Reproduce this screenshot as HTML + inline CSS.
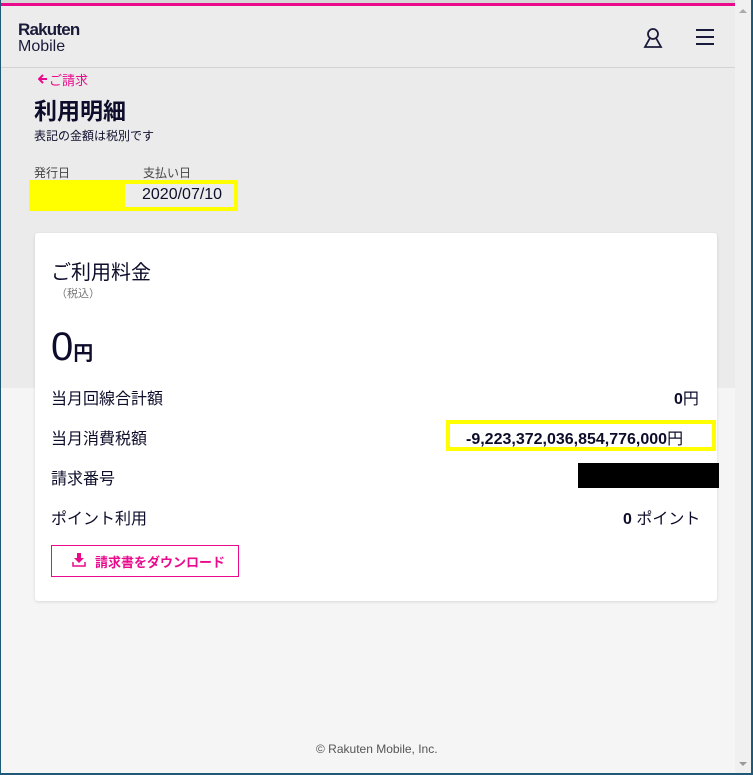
<!DOCTYPE html>
<html><head><meta charset="utf-8"><style>
*{margin:0;padding:0;box-sizing:border-box}
body{width:753px;height:775px;overflow:hidden;background:#f5f5f5;font-family:"Liberation Sans","Noto Sans CJK JP",sans-serif;color:#0d0d2b;position:relative}
.frame{position:absolute;left:0;top:0;width:753px;height:775px;border-right:2px solid #1e5a78;border-bottom:2px solid #1e5a78;border-left:1px solid #1e5a78}
.top{position:absolute;left:0;top:0;width:735px;height:3px;background:#d8d8d8}
.pink{position:absolute;left:0;top:3px;width:735px;height:3px;background:#ea0a8c}
.hdr{position:absolute;left:0;top:6px;width:735px;height:62px;background:#ececec;border-bottom:1px solid #d3d3d3}
.gray{position:absolute;left:0;top:68px;width:735px;height:320px;background:#ebebeb}
.sb{position:absolute;left:735px;top:0;width:16px;height:773px;background:#f0f0f0}
.t{position:absolute;white-space:nowrap}
.card{position:absolute;left:35px;top:233px;width:682px;height:368px;background:#fff;border-radius:3px;box-shadow:0 1px 3px rgba(0,0,0,.12)}
.row{font-size:16px}
</style></head><body>
<div class="top"></div><div class="pink"></div><div class="hdr"></div><div class="gray"></div>
<div class="sb"><div style="position:absolute;left:4px;top:9px;border:4px solid transparent;border-bottom:4px solid #aaa;border-top:0"></div><div style="position:absolute;left:4px;top:762px;border:4px solid transparent;border-top:4px solid #999;border-bottom:0"></div></div>
<div class="t" style="left:18px;top:20px;font-size:17px;font-weight:bold;letter-spacing:-0.8px;color:#1a1a3a">Rakuten</div>
<div class="t" style="left:18px;top:38px;font-size:16px;color:#1a1a3a">Mobile</div>
<svg style="position:absolute;left:641px;top:26px" width="24" height="24" viewBox="0 0 24 24" fill="none" stroke="#1a1a3a" stroke-width="1.8"><circle cx="12" cy="8" r="5"/><path d="M9 12 L4 21 H20 L15 12"/></svg>
<svg style="position:absolute;left:695px;top:28px" width="20" height="18" viewBox="0 0 20 18" stroke="#1a1a3a" stroke-width="2"><path d="M1 2H19M1 9H19M1 16H19"/></svg>
<svg style="position:absolute;left:38px;top:74px" width="10" height="10" viewBox="0 0 10 10" fill="none" stroke="#ea0a8c" stroke-width="2"><path d="M9 5H2M5 1L1 5L5 9"/></svg>
<div class="t" style="left:49px;top:70px;font-size:13px;color:#ea0a8c">ご請求</div>
<div class="t" style="left:34px;top:92px;font-size:23px;font-weight:bold">利用明細</div>
<div class="t" style="left:34px;top:127px;font-size:12px">表記の金額は税別です</div>
<div class="t" style="left:34px;top:164px;font-size:12px;color:#444">発行日</div>
<div class="t" style="left:143px;top:164px;font-size:12px;color:#444">支払い日</div>
<div style="position:absolute;left:29px;top:180px;width:209px;height:31px;background:#ffff00"></div>
<div style="position:absolute;left:125px;top:184px;width:109px;height:23px;background:#ececec"></div>
<div class="t" style="left:142px;top:186px;font-size:16px">2020/07/10</div>
<div class="card"></div>
<div class="t" style="left:51px;top:256px;font-size:20px">ご利用料金</div>
<div class="t" style="left:56px;top:285px;font-size:11px;color:#777">（税込）</div>
<div class="t" style="left:51px;top:324px;font-size:40px;line-height:46px">0<span style="font-size:20px;font-weight:bold">円</span></div>
<div class="t row" style="left:51px;top:385px">当月回線合計額</div>
<div class="t row" style="left:674px;top:385px;font-weight:bold">0<span style="font-weight:normal">円</span></div>
<div class="t row" style="left:51px;top:425px">当月消費税額</div>
<div style="position:absolute;left:446px;top:420px;width:270px;height:31px;border:4px solid #ffff00"></div>
<div class="t row" style="left:466px;top:425px;font-weight:bold">-9,223,372,036,854,776,000<span style="font-weight:normal">円</span></div>
<div class="t row" style="left:51px;top:465px">請求番号</div>
<div style="position:absolute;left:578px;top:463px;width:141px;height:25px;background:#000"></div>
<div class="t row" style="left:51px;top:505px">ポイント利用</div>
<div class="t row" style="left:623px;top:505px"><b>0</b> ポイント</div>
<div style="position:absolute;left:51px;top:545px;width:188px;height:32px;border:1px solid #ea0a8c"></div>
<svg style="position:absolute;left:72px;top:553px" width="14" height="14" viewBox="0 0 14 14" fill="#ea0a8c"><path d="M5 0H9V5H12L7 10L2 5H5Z"/><path d="M1 9V13H13V9" stroke="#ea0a8c" stroke-width="1.5" fill="none"/></svg>
<div class="t" style="left:95px;top:552px;font-size:13px;color:#ea0a8c;font-weight:bold">請求書をダウンロード</div>
<div class="t" style="left:316px;top:742px;font-size:12px;color:#555">© Rakuten Mobile, Inc.</div>
<div class="frame"></div>
</body></html>
